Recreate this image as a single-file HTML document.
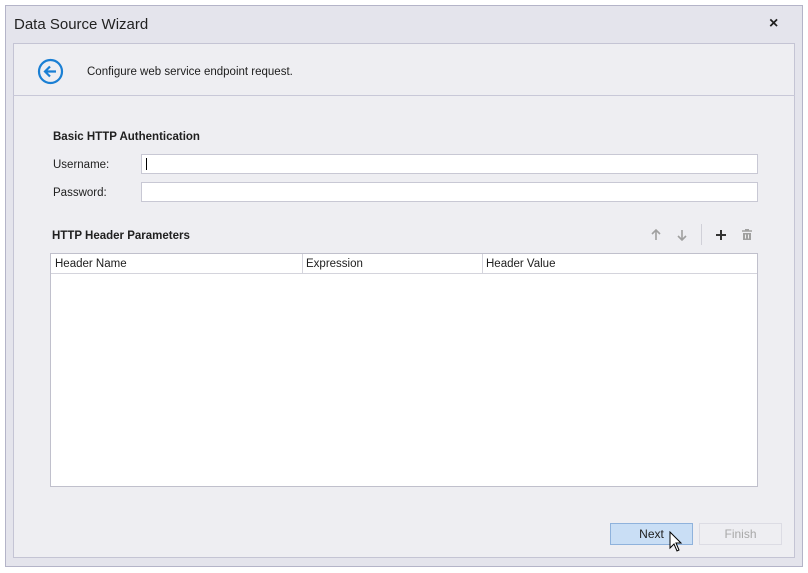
<!DOCTYPE html>
<html><head><meta charset="utf-8"><style>
*{margin:0;padding:0;box-sizing:border-box}
body{width:808px;height:573px;background:#fff;font-family:"Liberation Sans",sans-serif;font-size:11.5px;color:#202020;position:relative;overflow:hidden}
.win{position:absolute;left:5px;top:5px;width:798px;height:562px;background:#e4e4ec;border:1px solid #b4b4c8}
.title{position:absolute;left:14px;top:16px;font-size:15px;color:#222}
.close{position:absolute;left:769px;top:15px;font-size:16px;font-weight:bold}
.panel{position:absolute;left:13px;top:43px;width:782px;height:515px;background:#eeeef2;border:1px solid #c4c4d4}
.hline{position:absolute;left:13px;top:95px;width:782px;height:1px;background:#c8c8d8}
.a{position:absolute}
.b{font-weight:bold}
.inp{position:absolute;left:141px;width:617px;height:20px;background:#fff;border:1px solid #c8c8d4}
.grid{position:absolute;left:50px;top:253px;width:708px;height:234px;background:#fff;border:1px solid #c0c0cc}
.gh{position:absolute;left:0;top:0;width:706px;height:20px;border-bottom:1px solid #d4d4dc}
.gh div{position:absolute;top:4px}
.btn{position:absolute;top:523px;width:83px;height:22px;text-align:center;line-height:20px;font-size:12px}
</style></head><body>
<div class="win"></div>
<div class="title">Data Source Wizard</div>
<div class="close">×</div>
<div class="panel"></div>
<div class="hline"></div>
<svg class="a" style="left:37px;top:58px" width="27" height="27" viewBox="0 0 27 27"><circle cx="13.5" cy="13.5" r="11.5" fill="none" stroke="#1a7fd4" stroke-width="2.2"/><path d="M19 13.5H8M13 8.5l-5 5 5 5" fill="none" stroke="#1a7fd4" stroke-width="2.2"/></svg>
<div class="a" style="left:87px;top:66px">Configure web service endpoint request.</div>
<div class="a b" style="left:53px;top:131px">Basic HTTP Authentication</div>
<div class="a" style="left:53px;top:159px">Username:</div>
<div class="inp" style="top:154px"><div style="position:absolute;left:4px;top:3px;width:1px;height:12px;background:#000"></div></div>
<div class="a" style="left:53px;top:187px">Password:</div>
<div class="inp" style="top:182px"></div>
<div class="a b" style="left:52px;top:230px">HTTP Header Parameters</div>
<svg class="a" style="left:650px;top:229px" width="12" height="12"><path d="M6 1v10M2 5l4-4 4 4" fill="none" stroke="#a0a0a0" stroke-width="1.6"/></svg>
<svg class="a" style="left:676px;top:229px" width="12" height="12"><path d="M6 1v10M2 7l4 4 4-4" fill="none" stroke="#a0a0a0" stroke-width="1.6"/></svg>
<div class="a" style="left:701px;top:224px;width:1px;height:21px;background:#d0d0d8"></div>
<svg class="a" style="left:715px;top:229px" width="12" height="12"><path d="M6 1v10M1 6h10" stroke="#333" stroke-width="2"/></svg>
<svg class="a" style="left:741px;top:229px" width="12" height="12"><path d="M1 2h10M4 0.5h4" stroke="#a0a0a0" stroke-width="1.5"/><rect x="2" y="4" width="8" height="7" fill="#a0a0a0"/><path d="M4.5 5.5v4M7.5 5.5v4" stroke="#eee" stroke-width="1"/></svg>
<div class="grid"><div class="gh">
<div style="left:4px">Header Name</div>
<div style="left:251px;top:0;width:1px;height:20px;background:#d4d4dc"></div>
<div style="left:255px">Expression</div>
<div style="left:431px;top:0;width:1px;height:20px;background:#d4d4dc"></div>
<div style="left:435px">Header Value</div>
</div></div>
<div class="btn" style="left:610px;background:#c9def5;border:1px solid #8fb2dc">Next</div>
<div class="btn" style="left:699px;border:1px solid #dcdce4;color:#a8a8a8">Finish</div>
<svg class="a" style="left:669px;top:531px" width="14" height="22" viewBox="0 0 14 22"><path d="M1 1v16l4-4 3 7 2-1-3-7h5z" fill="#fff" stroke="#000" stroke-width="1"/></svg>
</body></html>
